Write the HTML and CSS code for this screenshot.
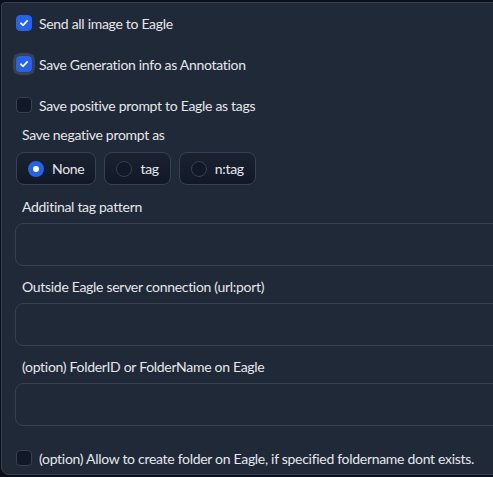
FILE: index.html
```html
<!DOCTYPE html>
<html>
<head>
<meta charset="utf-8">
<link rel="stylesheet" href="styles.css">
</head>
<body>
<div class="panel">
  <label class="check-row first">
    <span class="box checked"><svg viewBox="0 0 16 16" width="16" height="16"><path d="M4.5 8.3 L7 10.6 L11.6 5.6" fill="none" stroke="#fff" stroke-width="2" stroke-linecap="round" stroke-linejoin="round"/></svg></span>
    <span class="text">Send all image to Eagle</span>
  </label>
  <label class="check-row">
    <span class="box checked focus"><svg viewBox="0 0 16 16" width="16" height="16"><path d="M4.5 8.3 L7 10.6 L11.6 5.6" fill="none" stroke="#fff" stroke-width="2" stroke-linecap="round" stroke-linejoin="round"/></svg></span>
    <span class="text">Save Generation info as Annotation</span>
  </label>
  <label class="check-row">
    <span class="box"></span>
    <span class="text">Save positive prompt to Eagle as tags</span>
  </label>

  <div class="field-label radio-label">Save negative prompt as</div>
  <div class="radio-group">
    <label class="radio"><span class="dot selected"></span><span>None</span></label>
    <label class="radio"><span class="dot"></span><span>tag</span></label>
    <label class="radio"><span class="dot"></span><span>n:tag</span></label>
  </div>

  <div class="field-label l2">Additinal tag pattern</div>
  <div class="input"></div>

  <div class="field-label l3">Outside Eagle server connection (url:port)</div>
  <div class="input"></div>

  <div class="field-label l3">(option) FolderID or FolderName on Eagle</div>
  <div class="input"></div>

  <label class="check-row last">
    <span class="box"></span>
    <span class="text">(option) Allow to create folder on Eagle, if specified foldername dont exists.</span>
  </label>
</div>
</body>
</html>
```
FILE: styles.css
```css
html, body {
  margin: 0;
  padding: 0;
  background: #0b0f19;
  overflow: hidden;
}
body {
  font-family: "Lato", "Liberation Sans", sans-serif;
  font-size: 14px;
  letter-spacing: -0.3px;
  color: #e5e7eb;
}
.panel {
  margin: 2px 0 0 1px;
  width: 540px;
  height: 473px;
  box-sizing: border-box;
  background: #1f2937;
  border: 1px solid #374151;
  border-radius: 4px 0 0 8px;
  padding: 10px 0 0 13px;
  display: flex;
  flex-direction: column;
  align-items: flex-start;
}
.check-row {
  display: flex;
  align-items: center;
  gap: 7px;
  height: 20px;
  margin-top: 21px;
  padding-left: 1px;
  white-space: nowrap;
}
.check-row.first { margin-top: 0; }
.check-row.last { margin-top: 22px; }
.box {
  width: 16px;
  height: 16px;
  box-sizing: border-box;
  border-radius: 4px;
  background: #111827;
  border: 1px solid #374151;
  display: flex;
  align-items: center;
  justify-content: center;
}
.box.checked {
  background: #2563eb;
  border-color: #2563eb;
}
.box svg { display: block; }
.box.focus {
  box-shadow: 0 0 0 3px #374151;
}
.field-label {
  line-height: 20px;
  padding-left: 7px;
  white-space: nowrap;
}
.radio-label { margin-top: 10px; }
.radio-group {
  display: flex;
  gap: 8px;
  margin-top: 7px;
  padding-left: 1px;
}
.radio {
  display: flex;
  align-items: center;
  gap: 8px;
  height: 33px;
  box-sizing: border-box;
  padding: 0 11px;
  border: 1px solid #374151;
  border-radius: 8px;
  background: linear-gradient(to top, #111827, #1a2230);
}
.dot {
  width: 16px;
  height: 16px;
  box-sizing: border-box;
  border-radius: 50%;
  background: #111827;
  border: 1px solid #374151;
}
.dot.selected {
  border: 5px solid #2563eb;
  background: #fff;
}
.l2 { margin-top: 12px; }
.l3 { margin-top: 11px; }
.input {
  margin-top: 6px;
  width: 520px;
  height: 43px;
  box-sizing: border-box;
  border: 1px solid #374151;
  border-radius: 8px;
  background: #1f2937;
}
```
